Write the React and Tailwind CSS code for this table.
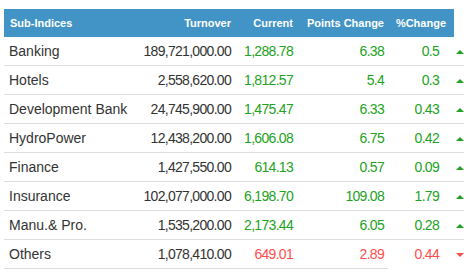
const ROWS = [
  { name: "Banking", turnover: "189,721,000.00", current: "1,288.78", points: "6.38", pct: "0.5", up: true },
  { name: "Hotels", turnover: "2,558,620.00", current: "1,812.57", points: "5.4", pct: "0.3", up: true },
  { name: "Development Bank", turnover: "24,745,900.00", current: "1,475.47", points: "6.33", pct: "0.43", up: true },
  { name: "HydroPower", turnover: "12,438,200.00", current: "1,606.08", points: "6.75", pct: "0.42", up: true },
  { name: "Finance", turnover: "1,427,550.00", current: "614.13", points: "0.57", pct: "0.09", up: true },
  { name: "Insurance", turnover: "102,077,000.00", current: "6,198.70", points: "109.08", pct: "1.79", up: true },
  { name: "Manu.& Pro.", turnover: "1,535,200.00", current: "2,173.44", points: "6.05", pct: "0.28", up: true },
  { name: "Others", turnover: "1,078,410.00", current: "649.01", points: "2.89", pct: "0.44", up: false },
];

function Arrow({ up }) {
  if (up) {
    return (
      <span className="block w-0 h-0 border-l-[4px] border-r-[4px] border-b-[4px] border-l-transparent border-r-transparent border-b-[#21a321]" />
    );
  }
  return (
    <span className="block w-0 h-0 border-l-[4px] border-r-[4px] border-t-[4px] border-l-transparent border-r-transparent border-t-[#ff4d4d]" />
  );
}

export default function App() {
  return (
    <div className="w-[464px] h-[280px] bg-white overflow-hidden pt-[9px] pl-[4px] font-['Liberation_Sans',Arial,sans-serif]">
      <div className="w-[480px]">
        <div className="flex h-[28px] items-center text-[11px] font-bold text-white">
          <div className="flex h-full w-[446px] items-center bg-[#4194c5]">
            <div className="w-[136px] pl-[6px]">Sub-Indices</div>
            <div className="w-[91px] text-right">Turnover</div>
            <div className="w-[62px] text-right">Current</div>
            <div className="w-[95px] text-right pr-[4px]">Points Change</div>
            <div className="w-[62px] text-right pr-[4px]">%Change</div>
          </div>
          <div className="h-full w-[4px] bg-[#4194c5]" />
        </div>

        {ROWS.map((r, i) => {
          const last = i === ROWS.length - 1;
          const color = r.up ? "text-[#22a222]" : "text-[#ff4d4d]";
          return (
            <div key={i} className="flex h-[29px] items-center text-[14px]">
              <div className={`flex h-full items-center ${last ? "" : "w-full"} border-b border-[#dddddd]`}>
                <div className="w-[136px] shrink-0 pl-[5px] text-[#333333]">{r.name}</div>
                <div className="w-[91px] shrink-0 text-right text-[#333333] tracking-[-0.7px]">{r.turnover}</div>
                <div className={`w-[62px] shrink-0 text-right tracking-[-0.7px] ${color}`}>{r.current}</div>
                <div className={`w-[95px] shrink-0 text-right pr-[4px] tracking-[-0.7px] ${color}`}>{r.points}</div>
                {!last && (
                  <>
                    <div className={`w-[62px] shrink-0 text-right pr-[11px] tracking-[-0.7px] ${color}`}>{r.pct}</div>
                    <div className="w-[20px] shrink-0 pl-[6px] pt-[1px]">
                      <Arrow up={r.up} />
                    </div>
                  </>
                )}
              </div>
              {last && (
                <div className="flex h-full items-center">
                  <div className={`w-[62px] shrink-0 text-right pr-[11px] tracking-[-0.7px] ${color}`}>{r.pct}</div>
                  <div className="w-[20px] shrink-0 pl-[6px] pt-[1px]">
                    <Arrow up={r.up} />
                  </div>
                </div>
              )}
            </div>
          );
        })}
      </div>
    </div>
  );
}
